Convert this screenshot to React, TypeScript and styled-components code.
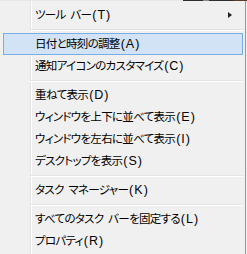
import React from 'react';
import styled, { createGlobalStyle } from 'styled-components';

type Entry = { label: string; key: string; sub?: boolean; active?: boolean } | 'sep';

const entries: Entry[] = [
  { label: 'ツール バー', key: 'T', sub: true },
  'sep',
  { label: '日付と時刻の調整', key: 'A', active: true },
  { label: '通知アイコンのカスタマイズ', key: 'C' },
  'sep',
  { label: '重ねて表示', key: 'D' },
  { label: 'ウィンドウを上下に並べて表示', key: 'E' },
  { label: 'ウィンドウを左右に並べて表示', key: 'I' },
  { label: 'デスクトップを表示', key: 'S' },
  'sep',
  { label: 'タスク マネージャー', key: 'K' },
  'sep',
  { label: 'すべてのタスク バーを固定する', key: 'L' },
  { label: 'プロパティ', key: 'R' },
];

const App: React.FC = () => {
  return (
    <>
      <GlobalStyle />
      <Backdrop>
        <BackFill />
        <BackDark />
        <BackGray />
        <BackDark $w={24} />
        <BackBrown />
      </Backdrop>
      <Menu>
        {entries.map((e, i) =>
          e === 'sep' ? (
            <Separator key={i} />
          ) : (
            <Item key={i} $active={e.active}>
              <Label>
                {e.label}
                <Mnemonic>({e.key})</Mnemonic>
              </Label>
              {e.sub && <Arrow />}
            </Item>
          )
        )}
      </Menu>
    </>
  );
};

export default App;

// Estilos

const GlobalStyle = createGlobalStyle`
  html, body {
    margin: 0;
    padding: 0;
    background: #f0f0f0;
    overflow: hidden;
  }
  body {
    font-family: "Noto Sans CJK JP", "Noto Sans", sans-serif;
  }
`;

const Backdrop = styled.div`
  display: flex;
  height: 1px;
  width: 247px;
`;

const BackFill = styled.div`
  width: 183px;
  background: #e8e8e8;
`;

const BackDark = styled.div<{ $w?: number }>`
  width: ${(p) => p.$w ?? 20}px;
  background: #2e2e2e;
`;

const BackGray = styled.div`
  width: 6px;
  background: #8a8a8a;
`;

const BackBrown = styled.div`
  flex: 1;
  background: #5a3a2a;
`;

const Menu = styled.div`
  display: flex;
  flex-direction: column;
  width: 246px;
  height: 253px;
  padding-top: 3px;
  box-sizing: border-box;
  border-right: 1px solid #979797;
  background: linear-gradient(
    to right,
    #f0f0f0 30px,
    #e2e3e3 30px 31px,
    #ffffff 31px 32px,
    #f0f0f0 32px
  );
`;

const Item = styled.div<{ $active?: boolean }>`
  display: flex;
  align-items: center;
  height: 22px;
  margin: 0 2px 0 3px;
  padding-left: 31px;
  box-sizing: border-box;
  border: 1px solid ${(p) => (p.$active ? '#78aee5' : 'transparent')};
  background: ${(p) => (p.$active ? '#d1e3f5' : 'transparent')};
  position: relative;
`;

const Label = styled.span`
  font-size: 11.5px;
  font-feature-settings: "palt";
  letter-spacing: -0.7px;
  word-spacing: 3px;
  color: #000;
  white-space: nowrap;
  line-height: 1;
`;

const Mnemonic = styled.span`
  font-family: "Liberation Sans", "Noto Sans", sans-serif;
  font-size: 12.5px;
  letter-spacing: 1px;
  margin-left: 1px;
`;

const Arrow = styled.span`
  position: absolute;
  right: 10px;
  top: 7px;
  width: 0;
  height: 0;
  border-top: 3.5px solid transparent;
  border-bottom: 3.5px solid transparent;
  border-left: 4px solid #222;
`;

const Separator = styled.div`
  height: 7px;
  margin: 0 2px 0 30px;
  background: linear-gradient(
    to bottom,
    transparent 3px,
    #e2e3e3 3px 4px,
    #ffffff 4px 5px,
    transparent 5px
  );
`;
